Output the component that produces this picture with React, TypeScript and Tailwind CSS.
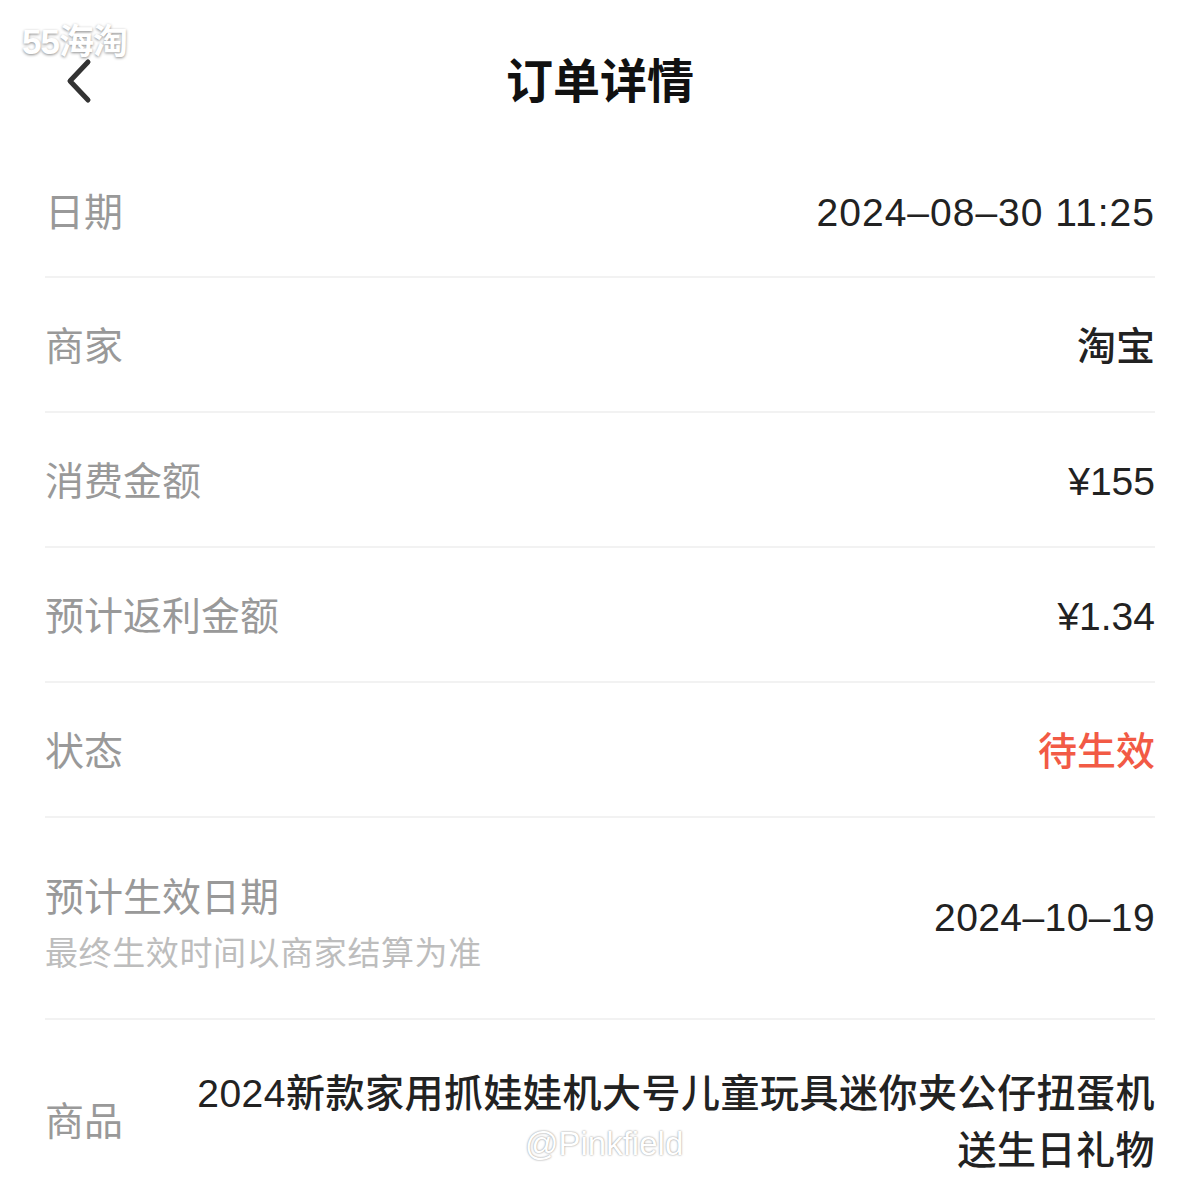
import React from "react"

const font = { fontFamily: '"Liberation Sans", "Noto Sans CJK SC", sans-serif' }

const rows = [
  { label: "日期", value: "2024–08–30 11:25", track: "tracking-[1px]" },
  { label: "商家", value: "淘宝", track: "" },
  { label: "消费金额", value: "¥155", track: "" },
  { label: "预计返利金额", value: "¥1.34", track: "" },
  { label: "状态", value: "待生效", track: "", red: true },
]

export default function App() {
  return (
    <div className="relative min-h-[1191px] w-[1200px] overflow-hidden bg-white text-[#222]" style={font}>
      <div className="absolute left-[22px] top-[20px] text-[35px] font-bold leading-[44px] tracking-[-1px] text-white [text-shadow:0_1px_3px_rgba(0,0,0,0.45)]">
        55海淘
      </div>

      <header className="grid h-[145px] grid-cols-[1fr_auto_1fr] items-start pt-[52px]">
        <div className="pl-[62px] pt-[6px]">
          <svg width="32" height="46" viewBox="0 0 32 46" fill="none">
            <path d="M26 4 L8 23 L26 42" stroke="#333" strokeWidth="5" strokeLinecap="round" strokeLinejoin="round" />
          </svg>
        </div>
        <h1 className="text-[47px] font-bold leading-[60px] text-[#111]">订单详情</h1>
        <div />
      </header>

      <main className="px-[45px]">
        {rows.map((r) => (
          <div
            key={r.label}
            className="flex h-[135px] items-center justify-between border-b-2 border-[#f2f2f2] pt-[6px] first:h-[133px]"
          >
            <span className="text-[39px] text-[#999]">{r.label}</span>
            <span className={`text-[39px] font-medium ${r.track} ${r.red ? "text-[#f25a45]" : "text-[#222]"}`}>
              {r.value}
            </span>
          </div>
        ))}

        <div className="flex h-[202px] items-center justify-between border-b-2 border-[#f2f2f2]">
          <div className="flex flex-col pt-[15px]">
            <span className="text-[39px] leading-[52px] text-[#999]">预计生效日期</span>
            <span className="mt-[5px] text-[33px] leading-[50px] tracking-[0.6px] text-[#bdbdbd]">
              最终生效时间以商家结算为准
            </span>
          </div>
          <span className="text-[39px] font-medium tracking-[0.4px]">2024–10–19</span>
        </div>

        <div className="flex items-center justify-between pb-[20px] pt-[45px]">
          <span className="text-[39px] text-[#999]">商品</span>
          <span className="w-[970px] text-right text-[39px] font-medium leading-[57px] tracking-[0.5px]">
            2024新款家用抓娃娃机大号儿童玩具迷你夹公仔扭蛋机送生日礼物
          </span>
        </div>
      </main>

      <div className="absolute left-[525px] top-[1119px] text-[33px] text-white [text-shadow:0_0_2px_rgba(0,0,0,0.5)]">
        @Pinkfield
      </div>
    </div>
  )
}
